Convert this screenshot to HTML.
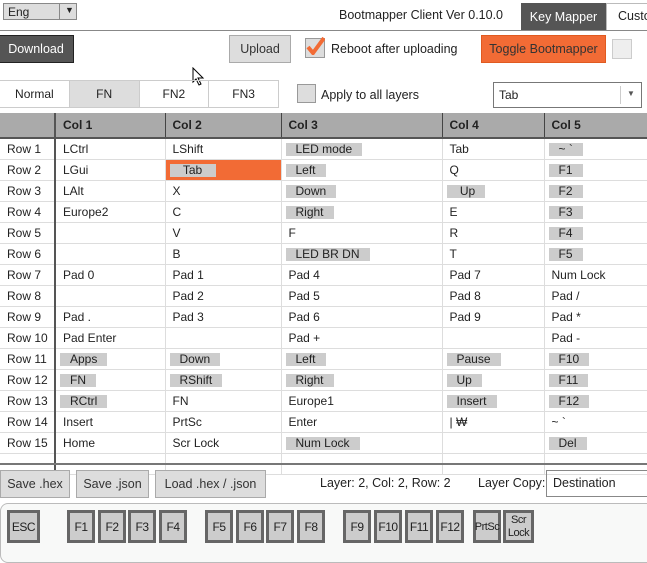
<!DOCTYPE html>
<html><head><meta charset="utf-8"><style>
*{box-sizing:border-box;margin:0;padding:0}
body{width:647px;height:551px;overflow:hidden;background:#fff;font-family:"Liberation Sans","Noto Sans CJK KR",sans-serif;font-size:12px;color:#222;position:relative}
.a{position:absolute}
.btn{position:absolute;display:flex;align-items:center;justify-content:center;border:1px solid #aaa;background:#ddd;font-size:12.5px;color:#333}
table{position:absolute;left:0;top:113px;border-collapse:collapse;table-layout:fixed;width:660px}
td,th{height:21px;border-bottom:1px solid #ddd;border-right:1px solid #ddd;padding:0 0 0 7px;white-space:nowrap;overflow:hidden;font-weight:normal;text-align:left;font-size:12px}
th{background:#aaa;height:25px;font-weight:bold;border-right:1px solid #444;border-bottom:2px solid #555;color:#222}
td.r{border-right:2px solid #555;text-align:left;padding-left:7px}
th.r{border-right:2px solid #555}
.c{background:#ccc;padding:0 10px 0 10px;margin-left:-3px;display:inline-block;line-height:13px}
.o{background:#f26b35}
.k{position:absolute;top:510px;height:33px;width:28px;border:3px solid #666;background:#ccc;display:flex;align-items:center;justify-content:center;font-size:12px;letter-spacing:-0.5px;color:#222}
</style></head><body>
<div class="a" style="left:3px;top:3px;width:74px;height:17px;border:1px solid #888;background:#ddd"><span class="a" style="left:4px;top:1px">Eng</span><span class="a" style="left:55px;top:0;width:1px;height:15px;background:#888"></span><span class="a" style="left:61px;top:1px;font-size:9px">▼</span></div>
<div class="a" style="left:339px;top:8px;font-size:12.5px">Bootmapper Client Ver 0.10.0</div>
<div class="a" style="left:521px;top:3px;width:85px;height:28px;background:#555;color:#fff;font-size:12.5px;display:flex;align-items:center;justify-content:center">Key Mapper</div>
<div class="a" style="left:606px;top:3px;width:45px;height:28px;border:1px solid #bbb;padding:5px 0 0 11px;font-size:12.5px">Custo</div>
<div class="a" style="left:0;top:30px;width:647px;height:1px;background:#888"></div>
<div class="btn" style="left:-2px;top:35px;width:76px;height:28px;background:#555;color:#fff;border-color:#222">Download</div>
<div class="btn" style="left:229px;top:35px;width:62px;height:28px">Upload</div>
<div class="a" style="left:305px;top:38px;width:20px;height:20px;border:1px solid #999;background:#ddd"><svg width="20" height="20" style="position:absolute;left:-1px;top:-4px"><path d="M3 12 L8 18 L19 3" stroke="#f26b35" stroke-width="4" fill="none"/></svg></div>
<div class="a" style="left:331px;top:42px;font-size:12.5px">Reboot after uploading</div>
<div class="btn" style="left:481px;top:35px;width:125px;height:28px;background:#f26b35;border-color:#e05a20">Toggle Bootmapper</div>
<div class="a" style="left:612px;top:39px;width:20px;height:20px;border:1px solid #ccc;background:#eee"></div>
<svg class="a" style="left:192px;top:67px" width="14" height="20"><path d="M1 1 L1 15 L4 12 L7 18 L9 17 L6 11 L11 11 Z" fill="#fff" stroke="#000"/></svg>
<div class="a" style="left:-1px;top:80px;width:280px;height:28px;border:1px solid #ccc;display:flex">
<div style="width:70px;display:flex;align-items:center;justify-content:center;border-right:1px solid #ccc">Normal</div>
<div style="width:70px;display:flex;align-items:center;justify-content:center;border-right:1px solid #ccc;background:#ddd">FN</div>
<div style="width:70px;display:flex;align-items:center;justify-content:center;border-right:1px solid #ccc">FN2</div>
<div style="width:69px;display:flex;align-items:center;justify-content:center">FN3</div></div>
<div class="a" style="left:297px;top:84px;width:19px;height:19px;border:1px solid #999;background:#ddd"></div>
<div class="a" style="left:321px;top:88px;font-size:12.5px">Apply to all layers</div>
<div class="a" style="left:493px;top:82px;width:149px;height:26px;border:1px solid #777;background:#fff"><span class="a" style="left:5px;top:5px">Tab</span><span class="a" style="left:126px;top:3px;width:1px;height:18px;background:#ccc"></span><span class="a" style="left:133px;top:6px;font-size:8px;color:#555">▼</span></div>
<table>
<colgroup><col style="width:55px"><col style="width:110px"><col style="width:116px"><col style="width:161px"><col style="width:102px"><col style="width:116px"></colgroup>
<tr><th class="r"></th><th>Col 1</th><th>Col 2</th><th>Col 3</th><th>Col 4</th><th>Col 5</th></tr>
<tr><td class="r">Row 1</td><td>LCtrl</td><td>LShift</td><td><span class="c">LED mode</span></td><td>Tab</td><td><span class="c">~ `</span></td></tr>
<tr><td class="r">Row 2</td><td>LGui</td><td class="o"><span class="c">&nbsp;Tab&nbsp;</span></td><td><span class="c">Left</span></td><td>Q</td><td><span class="c">F1</span></td></tr>
<tr><td class="r">Row 3</td><td>LAlt</td><td>X</td><td><span class="c">Down</span></td><td><span class="c">&nbsp;Up</span></td><td><span class="c">F2</span></td></tr>
<tr><td class="r">Row 4</td><td>Europe2</td><td>C</td><td><span class="c">Right</span></td><td>E</td><td><span class="c">F3</span></td></tr>
<tr><td class="r">Row 5</td><td></td><td>V</td><td>F</td><td>R</td><td><span class="c">F4</span></td></tr>
<tr><td class="r">Row 6</td><td></td><td>B</td><td><span class="c">LED BR DN</span></td><td>T</td><td><span class="c">F5</span></td></tr>
<tr><td class="r">Row 7</td><td>Pad 0</td><td>Pad 1</td><td>Pad 4</td><td>Pad 7</td><td>Num Lock</td></tr>
<tr><td class="r">Row 8</td><td></td><td>Pad 2</td><td>Pad 5</td><td>Pad 8</td><td>Pad /</td></tr>
<tr><td class="r">Row 9</td><td>Pad .</td><td>Pad 3</td><td>Pad 6</td><td>Pad 9</td><td>Pad *</td></tr>
<tr><td class="r">Row 10</td><td>Pad Enter</td><td></td><td>Pad +</td><td></td><td>Pad -</td></tr>
<tr><td class="r">Row 11</td><td><span class="c">Apps</span></td><td><span class="c">Down</span></td><td><span class="c">Left</span></td><td><span class="c">Pause</span></td><td><span class="c">F10</span></td></tr>
<tr><td class="r">Row 12</td><td><span class="c">FN</span></td><td><span class="c">RShift</span></td><td><span class="c">Right</span></td><td><span class="c">Up</span></td><td><span class="c">F11</span></td></tr>
<tr><td class="r">Row 13</td><td><span class="c">RCtrl</span></td><td>FN</td><td>Europe1</td><td><span class="c">Insert</span></td><td><span class="c">F12</span></td></tr>
<tr><td class="r">Row 14</td><td>Insert</td><td>PrtSc</td><td>Enter</td><td>| ₩</td><td>~ `</td></tr>
<tr><td class="r">Row 15</td><td>Home</td><td>Scr Lock</td><td><span class="c">Num Lock</span></td><td></td><td><span class="c">Del</span></td></tr>
<tr><td class="r" style="height:12px"></td><td style="height:12px"></td><td></td><td></td><td></td><td></td></tr>
</table>
<div class="a" style="left:0;top:463px;width:647px;height:2px;background:#777"></div>
<div class="btn" style="left:0;top:470px;width:70px;height:28px">Save .hex</div>
<div class="btn" style="left:76px;top:470px;width:73px;height:28px">Save .json</div>
<div class="btn" style="left:155px;top:470px;width:111px;height:28px">Load .hex / .json</div>
<div class="a" style="left:320px;top:476px;font-size:12.5px">Layer: 2, Col: 2, Row: 2</div>
<div class="a" style="left:478px;top:476px;font-size:12.5px">Layer Copy:</div>
<div class="a" style="left:546px;top:470px;width:110px;height:27px;border:1px solid #888;padding:5px 0 0 6px;font-size:12.5px">Destination</div>
<div class="a" style="left:0;top:503px;width:660px;height:60px;border:1px solid #bbb;border-radius:8px;background:#f8f9f8"></div>
<div class="k" style="left:7px;width:33px">ESC</div>
<div class="k" style="left:67px">F1</div><div class="k" style="left:98px">F2</div><div class="k" style="left:128px">F3</div><div class="k" style="left:159px">F4</div>
<div class="k" style="left:205px">F5</div><div class="k" style="left:236px">F6</div><div class="k" style="left:266px">F7</div><div class="k" style="left:297px">F8</div>
<div class="k" style="left:343px">F9</div><div class="k" style="left:374px">F10</div><div class="k" style="left:405px">F11</div><div class="k" style="left:436px">F12</div>
<div class="k" style="left:473px;width:28px;font-size:11px">PrtSc</div>
<div class="k" style="left:503px;width:31px;font-size:11px;line-height:13px;text-align:center">Scr<br>Lock</div>
</body></html>
